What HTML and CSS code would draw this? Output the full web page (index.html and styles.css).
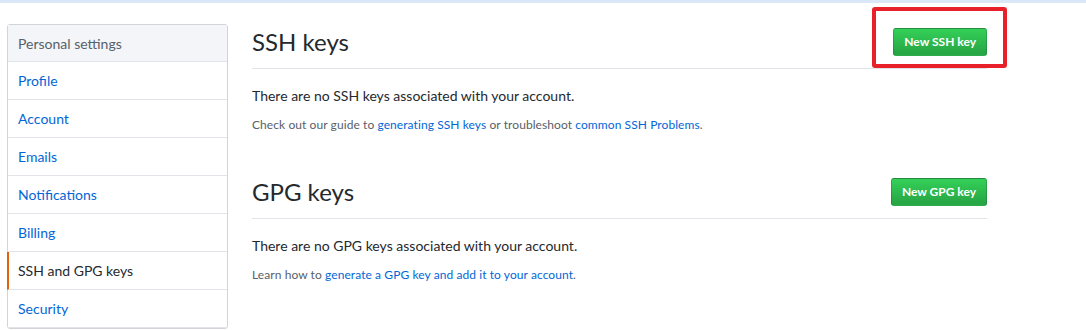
FILE: index.html
```html
<!DOCTYPE html>
<html lang="en">
<head>
    <meta charset="UTF-8">
    <meta name="viewport" content="width=device-width, initial-scale=1.0">
    <title>SSH and GPG keys</title>
    <link rel="stylesheet" href="styles.css">
</head>
<body>
    <div class="topbar"></div>
    <div class="container">
        <nav class="menu">
            <h3 class="menu-heading">Personal settings</h3>
            <a class="menu-item" href="#">Profile</a>
            <a class="menu-item" href="#">Account</a>
            <a class="menu-item" href="#">Emails</a>
            <a class="menu-item" href="#">Notifications</a>
            <a class="menu-item" href="#">Billing</a>
            <a class="menu-item selected" href="#">SSH and GPG keys</a>
            <a class="menu-item" href="#">Security</a>
        </nav>
        <div class="main">
            <div class="subhead">
                <h2 class="subhead-heading">SSH keys</h2>
                <div class="subhead-actions">
                    <a class="btn" href="#">New SSH key</a>
                    <span class="highlight"></span>
                </div>
            </div>
            <p class="blank">There are no SSH keys associated with your account.</p>
            <p class="note">Check out our guide to <a href="#">generating SSH keys</a> or troubleshoot <a href="#">common SSH Problems</a>.</p>

            <div class="subhead spacious">
                <h2 class="subhead-heading">GPG keys</h2>
                <div class="subhead-actions">
                    <a class="btn" href="#">New GPG key</a>
                </div>
            </div>
            <p class="blank">There are no GPG keys associated with your account.</p>
            <p class="note">Learn how to <a href="#">generate a GPG key and add it to your account</a>.</p>
        </div>
    </div>
</body>
</html>
```
FILE: styles.css
```css
body {
    font-family: Lato, "Liberation Sans", sans-serif;
    font-size: 14px;
    line-height: 1.5;
    margin: 0;
    padding: 0;
    background-color: #fff;
    color: #24292e;
}
a {
    color: #0366d6;
    text-decoration: none;
}
.topbar {
    height: 3px;
    background-color: #d9e7f6;
}
.container {
    display: flex;
    align-items: flex-start;
    padding: 21px 0 0 7px;
}
.menu {
    width: 219px;
    border: 1px solid #d1d5da;
    border-radius: 3px;
    flex-shrink: 0;
}
.menu-heading {
    margin: 0;
    padding: 8px 10px 7px;
    font-size: 14px;
    font-weight: normal;
    line-height: 21px;
    color: #586069;
    background-color: #f3f5f8;
    border-bottom: 1px solid #e1e4e8;
}
.menu-item {
    display: block;
    padding: 8px 10px;
    line-height: 21px;
    border-bottom: 1px solid #e1e4e8;
}
.menu-item.selected {
    color: #24292e;
    border-left: 2px solid #e36209;
    margin-left: -1px;
    padding-left: 9px;
}
.main {
    width: 735px;
    margin-left: 24px;
}
.subhead {
    display: flex;
    align-items: center;
    padding-bottom: 8px;
    margin-bottom: 16px;
    border-bottom: 1px solid #e1e4e8;
}
.subhead.spacious {
    margin-top: 40px;
}
.subhead-heading {
    flex: 1;
    margin: 0;
    font-size: 24px;
    font-weight: normal;
    line-height: 36px;
}
.subhead-actions {
    position: relative;
}
.btn {
    display: inline-block;
    padding: 3px 10px;
    font-size: 12px;
    font-weight: bold;
    line-height: 20px;
    color: #fff;
    background-image: linear-gradient(-180deg, #34d058 0%, #28a745 90%);
    border: 1px solid rgba(27, 31, 35, 0.2);
    border-radius: 3px;
}
.highlight {
    position: absolute;
    left: -21px;
    right: -20px;
    top: -21px;
    height: 53px;
    border: 4px solid #e8202a;
    border-radius: 3px;
}
.blank {
    margin: 0 0 10px;
}
.note {
    margin: 0;
    font-size: 12px;
    line-height: 18px;
    letter-spacing: 0.08px;
    color: #586069;
}
```
